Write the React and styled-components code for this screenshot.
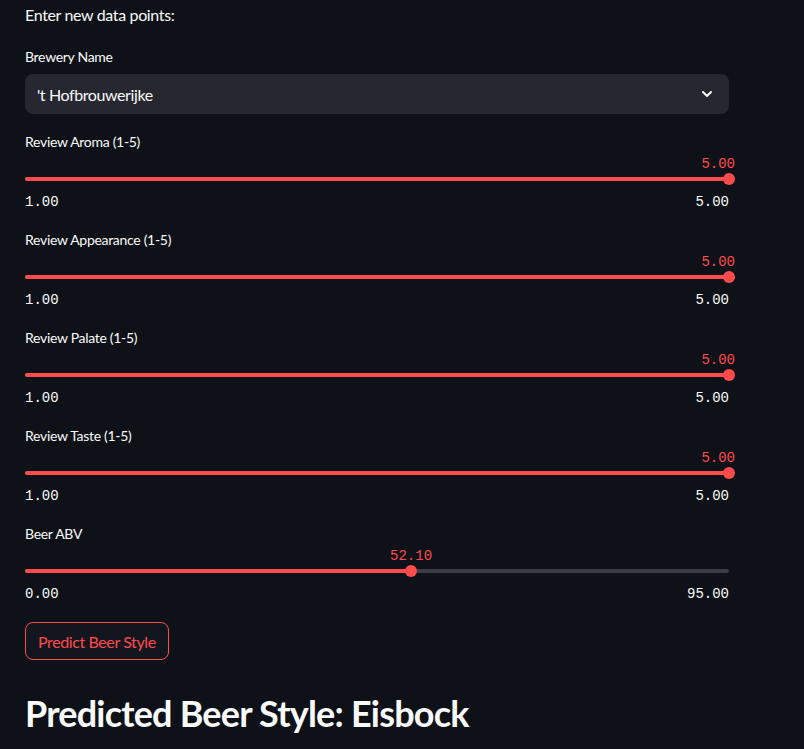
import React from 'react'
import styled, { createGlobalStyle } from 'styled-components'

const GlobalStyle = createGlobalStyle`
	body {
		margin: 0;
		background: #0e1117;
		color: #fafafa;
		font-family: "Lato", "Noto Sans", sans-serif;
	}
`

const RED = '#ff4b4b'
const MONO = '"Liberation Mono", "DejaVu Sans Mono", monospace'

const Page = styled.div`
	width: 704px;
	padding: 0 25px 14px;
	min-height: 749px;
	box-sizing: content-box;
`

const Intro = styled.p`
	margin: 0;
	padding-top: 3px;
	font-size: 16px;
	line-height: 24px;
	letter-spacing: -0.35px;
	height: 37px;
`

const Label = styled.div`
	font-size: 14px;
	line-height: 24px;
	letter-spacing: -0.3px;
	height: 24px;
	margin-top: ${(p) => p.$top ?? 16}px;
`

const Select = styled.div`
	display: flex;
	align-items: center;
	justify-content: space-between;
	height: 40px;
	margin-top: 5px;
	padding: 0 14px 0 12px;
	background: #262730;
	border-radius: 8px;
	font-size: 16px;
	letter-spacing: -0.4px;
`

const SliderWrap = styled.div`
	height: 58px;
	display: flex;
	flex-direction: column;
`

const ValueRow = styled.div`
	position: relative;
	height: 18px;
`

const ValueLabel = styled.span`
	position: absolute;
	top: 2px;
	font-family: ${MONO};
	font-size: 14px;
	line-height: 16px;
	color: ${RED};
	white-space: nowrap;
`

const Track = styled.div`
	position: relative;
	height: 4px;
	margin-top: 5px;
	background: #3a3c46;
	border-radius: 2px;
`

const Fill = styled.div`
	height: 100%;
	background: ${RED};
	border-radius: 2px;
`

const Thumb = styled.div`
	position: absolute;
	top: -4px;
	width: 12px;
	height: 12px;
	margin-left: -6px;
	border-radius: 50%;
	background: ${RED};
`

const TickRow = styled.div`
	display: flex;
	justify-content: space-between;
	margin-top: 13px;
	font-family: ${MONO};
	font-size: 14px;
	line-height: 16px;
	color: #fafafa;
`

const Button = styled.button`
	margin-top: 18px;
	height: 38px;
	padding: 0 12px;
	background: #13161e;
	border: 1px solid ${RED};
	border-radius: 8px;
	color: ${RED};
	font-family: inherit;
	font-size: 16px;
	letter-spacing: -0.4px;
	cursor: pointer;
`

const Heading = styled.h2`
	margin: 32px 0 0;
	font-size: 36px;
	font-weight: 700;
	line-height: 43px;
	letter-spacing: -0.8px;
`

const Chevron = () => (
	<svg width="16" height="16" viewBox="0 0 24 24" fill="none" stroke="#fafafa" strokeWidth="3" strokeLinecap="round" strokeLinejoin="round">
		<path d="M6 9l6 6 6-6" />
	</svg>
)

const Slider = ({ label, min, max, value }) => {
	const pct = ((value - min) / (max - min)) * 100
	const atEnd = pct >= 99
	return (
		<>
			<Label>{label}</Label>
			<SliderWrap>
				<ValueRow>
					<ValueLabel style={{ left: `${pct}%`, transform: atEnd ? 'translateX(calc(-100% + 6px))' : 'translateX(-50%)' }}>
						{value.toFixed(2)}
					</ValueLabel>
				</ValueRow>
				<Track>
					<Fill style={{ width: `${pct}%` }} />
					<Thumb style={{ left: `${pct}%` }} />
				</Track>
				<TickRow>
					<span>{min.toFixed(2)}</span>
					<span>{max.toFixed(2)}</span>
				</TickRow>
			</SliderWrap>
		</>
	)
}

const sliders = [
	{ label: 'Review Aroma (1-5)', min: 1, max: 5, value: 5 },
	{ label: 'Review Appearance (1-5)', min: 1, max: 5, value: 5 },
	{ label: 'Review Palate (1-5)', min: 1, max: 5, value: 5 },
	{ label: 'Review Taste (1-5)', min: 1, max: 5, value: 5 },
	{ label: 'Beer ABV', min: 0, max: 95, value: 52.1 },
]

export default function App() {
	return (
		<Page>
			<GlobalStyle />
			<Intro>Enter new data points:</Intro>
			<Label $top={5}>Brewery Name</Label>
			<Select>
				<span>'t Hofbrouwerijke</span>
				<Chevron />
			</Select>
			{sliders.map((s) => <Slider key={s.label} {...s} />)}
			<Button>Predict Beer Style</Button>
			<Heading>Predicted Beer Style: Eisbock</Heading>
		</Page>
	)
}
